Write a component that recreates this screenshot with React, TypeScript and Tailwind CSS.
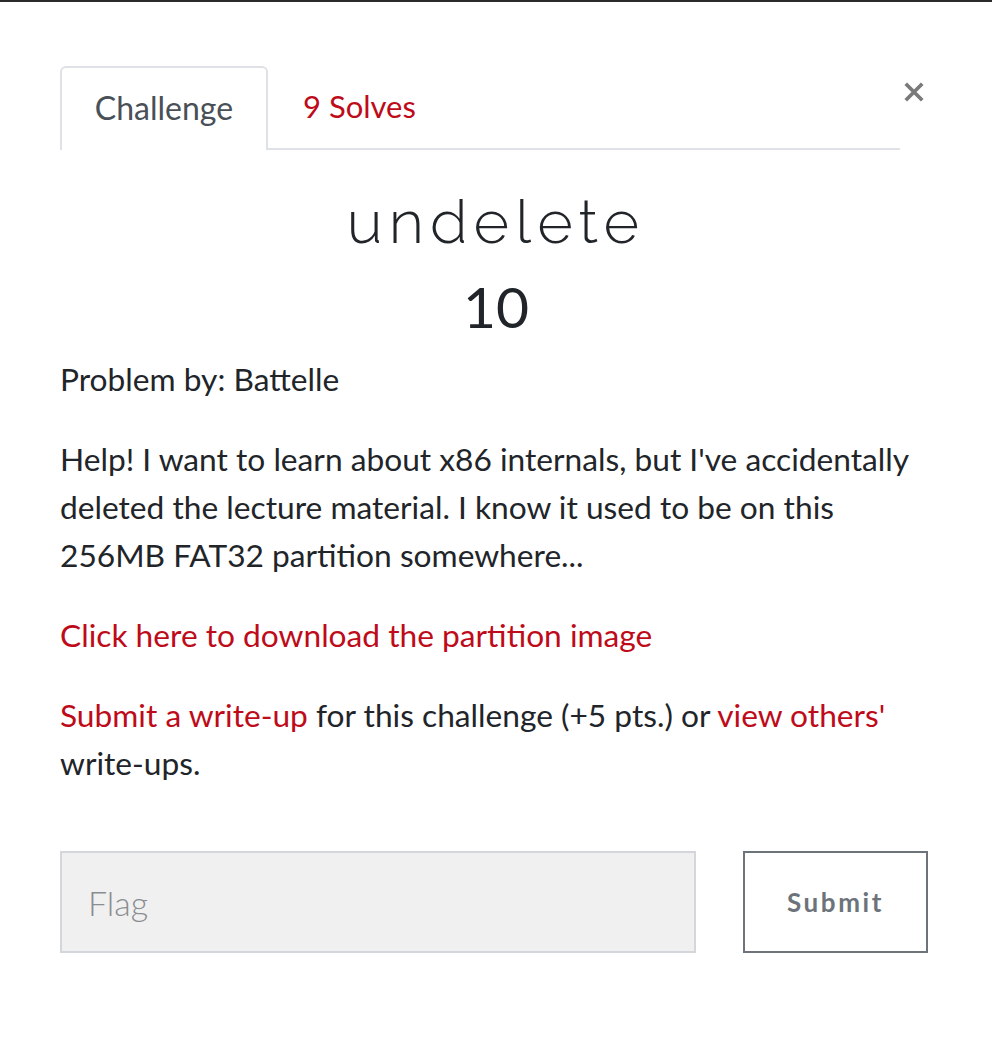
export default function App() {
  return (
    <div className="min-h-[1044px] bg-white" style={{ fontFamily: 'Lato, "Open Sans", sans-serif' }}>
      <div className="h-[2px] bg-[#2b2b2b]" />
      <div className="px-[60px] pt-[64px]">
        {/* Tabs */}
        <div className="flex items-start">
          <div className="flex w-[840px] border-b-2 border-[#dee2e6]">
            <div className="-mb-[2px] flex h-[84px] w-[208px] items-center justify-center rounded-t-md border-2 border-b-0 border-[#dee2e6] bg-white pb-[2px] text-[32px] text-[#495057]">
              Challenge
            </div>
            <div className="flex h-[82px] items-center px-[35px] pb-[2px] text-[31px] text-[#be0b1a]">9 Solves</div>
          </div>
          <button className="mt-[6px] flex h-[40px] w-[28px] items-center justify-center text-[#7a7a7a]">
            <svg viewBox="0 0 24 24" className="h-[22px] w-[22px]" fill="none" stroke="currentColor" strokeWidth={4}>
              <path d="M3 3l18 18M21 3L3 21" />
            </svg>
          </button>
        </div>

        {/* Title */}
        <h1 className="mt-[36px] text-center text-[61px] font-light leading-[72px] tracking-[0.1em] text-[#212529]" style={{ fontFamily: 'Raleway, Lato, sans-serif' }}>
          undelete
        </h1>
        <h2 className="mt-[16px] text-center text-[57px] leading-[64px] text-[#212529]">10</h2>

        {/* Body */}
        <div className="mt-[17px] text-[31.7px] leading-[48px] text-[#212529]">
          <p>Problem by: Battelle</p>
          <p className="mt-[32px]">
            Help! I want to learn about x86 internals, but I've accidentally deleted the lecture material. I know it used
            to be on this 256MB FAT32 partition somewhere...
          </p>
          <p className="mt-[32px]">
            <a className="text-[#be0b1a]">Click here to download the partition image</a>
          </p>
          <p className="mt-[32px]">
            <a className="text-[#be0b1a]">Submit a write-up</a> for this challenge (+5 pts.) or{' '}
            <a className="text-[#be0b1a]">view others'</a> write-ups.
          </p>
        </div>

        {/* Form */}
        <div className="mt-[64px] flex items-center gap-[47px]">
          <input
            placeholder="Flag"
            className="h-[102px] w-[636px] border-2 border-[#d3d7db] bg-[#f0f0f0] px-[26px] text-[34px] font-light text-[#212529] outline-none placeholder:text-[#8a8d91]"
          />
          <button className="h-[102px] w-[185px] border-2 border-[#6c737a] text-[26px] font-bold tracking-[0.1em] text-[#6c737a]">
            Submit
          </button>
        </div>
      </div>
    </div>
  );
}
